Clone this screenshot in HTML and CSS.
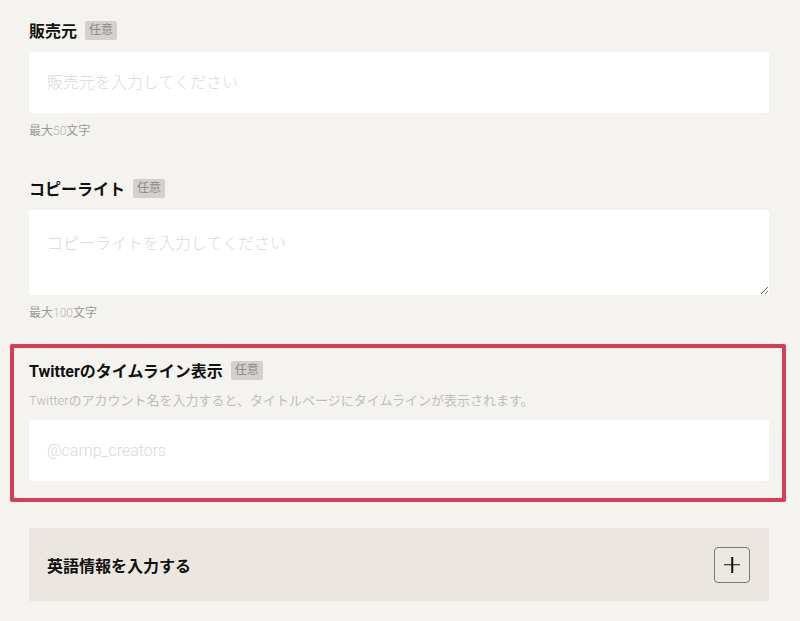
FILE: index.html
```html
<!DOCTYPE html>
<html lang="ja">
  <head>
    <meta charset="UTF-8" />
    <meta name="viewport" content="width=device-width, initial-scale=1.0" />
    <title>作品情報</title>
    <link rel="stylesheet" href="styles.css">
  </head>
  <body>
    <form class="page">
      <div class="field">
        <label class="field-label" for="seller">販売元 <span class="badge">任意</span></label>
        <input class="text-input" type="text" id="seller" placeholder="販売元を入力してください" />
        <p class="hint">最大<span class="num">50</span>文字</p>
      </div>

      <div class="field field-second">
        <label class="field-label" for="copyright">コピーライト <span class="badge">任意</span></label>
        <textarea class="text-area" id="copyright" placeholder="コピーライトを入力してください"></textarea>
        <p class="hint">最大<span class="num">100</span>文字</p>
      </div>

      <div class="field field-marked">
        <label class="field-label" for="twitter">Twitterのタイムライン表示 <span class="badge">任意</span></label>
        <p class="description"><span class="num">Twitter</span>のアカウント名を入力すると、タイトルページにタイムラインが表示されます。</p>
        <input class="text-input" type="text" id="twitter" placeholder="@camp_creators" />
      </div>

      <div class="accordion">
        <span class="accordion-title">英語情報を入力する</span>
        <button class="plus-button" type="button" aria-label="開く"></button>
      </div>
    </form>
  </body>
</html>
```

FILE: styles.css
```css
body {
  margin: 0;
  background-color: #f4f3f0;
  font-family: Roboto, "Noto Sans CJK JP", sans-serif;
  color: #111;
}

.page {
  padding: 20px 31px 0 29px;
}

.field-label {
  display: flex;
  align-items: center;
  gap: 8px;
  height: 20px;
  font-size: 16px;
  font-weight: bold;
}

.badge {
  display: inline-block;
  height: 19px;
  line-height: 19px;
  padding: 0 4px;
  border-radius: 2px;
  background-color: #d4d1cc;
  color: #8c8c8c;
  font-size: 12px;
  font-weight: normal;
}

.text-input,
.text-area {
  display: block;
  box-sizing: border-box;
  width: 100%;
  margin-top: 12px;
  border: none;
  border-radius: 3px;
  background-color: #fff;
  font-family: Roboto, "Noto Sans CJK JP", sans-serif;
  font-size: 16px;
  color: #111;
  outline: none;
}

.text-input {
  height: 61px;
  padding: 0 18px;
}

.text-area {
  height: 85px;
  padding: 20px 18px;
  resize: vertical;
}

.text-input::placeholder,
.text-area::placeholder {
  color: #d9d9d9;
  font-weight: 300;
}

.hint {
  margin: 9px 0 0;
  font-size: 12px;
  line-height: 18px;
  color: #999;
}

.num {
  font-weight: 300;
  color: #b5b5b5;
}

.field-second {
  margin-top: 38px;
}

.field-marked {
  margin: 22px -17px 0 -19px;
  padding: 12px 13px 17px 15px;
  border: 4px solid #d83d56;
  border-radius: 2px;
}

.description {
  margin: 12px 0 0;
  font-size: 13px;
  line-height: 18px;
  color: #bdbdbd;
}

.field-marked .text-input {
  margin-top: 10px;
}

.accordion {
  display: flex;
  align-items: center;
  justify-content: space-between;
  height: 73px;
  margin-top: 26px;
  padding: 0 19px 0 18px;
  background-color: #ebe7e0;
}

.accordion-title {
  font-size: 16px;
  font-weight: bold;
}

.plus-button {
  position: relative;
  width: 36px;
  height: 36px;
  padding: 0;
  border: 1px solid #777;
  border-radius: 4px;
  background-color: #ece8e2;
  cursor: pointer;
}

.plus-button::before,
.plus-button::after {
  content: "";
  position: absolute;
  left: 50%;
  top: 50%;
  background-color: #111;
}

.plus-button::before {
  width: 16px;
  height: 1.5px;
  transform: translate(-50%, -50%);
}

.plus-button::after {
  width: 1.5px;
  height: 16px;
  transform: translate(-50%, -50%);
}
```
